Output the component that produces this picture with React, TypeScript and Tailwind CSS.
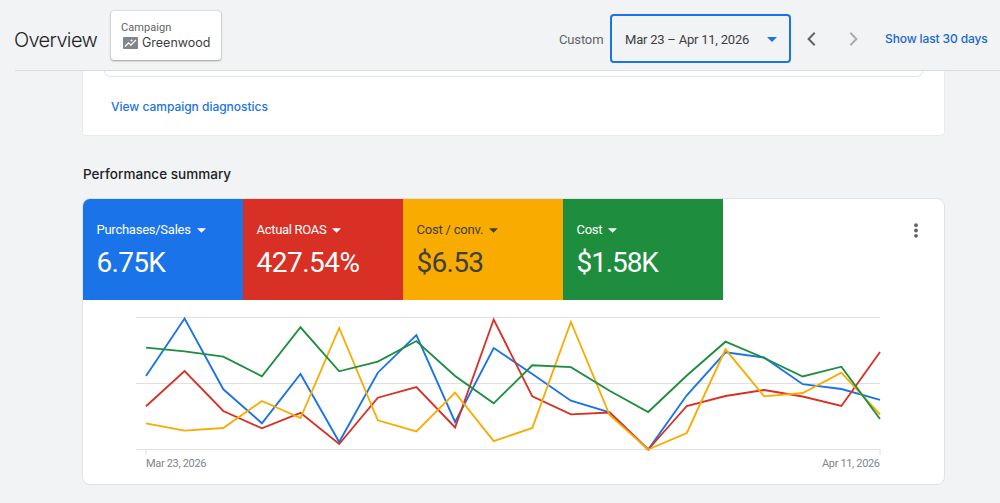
const metrics = [
  { label: "Purchases/Sales", value: "6.75K", tile: "bg-[#1a73e8] text-white", labelCls: "tracking-[-0.25px]", valueCls: "tracking-[-0.7px]" },
  { label: "Actual ROAS", value: "427.54%", tile: "bg-[#d93025] text-white", labelCls: "tracking-[-0.3px]", valueCls: "tracking-[-0.5px]" },
  { label: "Cost / conv.", value: "$6.53", tile: "bg-[#f9ab00] text-[#3c4043]", labelCls: "tracking-[-0.2px]", valueCls: "tracking-[-0.7px]" },
  { label: "Cost", value: "$1.58K", tile: "bg-[#1e8e3e] text-white", labelCls: "tracking-[-0.3px]", valueCls: "tracking-[-1.1px]" },
];

// y values inside the chart box, one per day shown
const series = [
  { color: "#1a73e8", points: [71, 13.5, 84.3, 118.3, 69, 137, 67.7, 30, 117, 43, 69, 95.7, 107.3, 144.5, 90.3, 47.3, 52.5, 79.2, 84, 94.8] },
  { color: "#d93025", points: [101.3, 66, 106, 123.3, 107.8, 139, 92.7, 82, 122.5, 14.5, 91.3, 109.3, 107.5, 144.5, 101, 91, 85, 91.5, 101, 47] },
  { color: "#f9ab00", points: [118.3, 125.6, 123, 96, 113, 23, 115.3, 126.5, 87.7, 136.2, 123, 17, 110, 144.5, 128, 44.3, 91.3, 88, 67.6, 109.5] },
  { color: "#1e8e3e", points: [42.7, 46.3, 51.7, 71.3, 22.3, 66.3, 56.6, 36, 71, 98.3, 60.3, 62.2, 85.8, 107, 70.5, 36.7, 53, 71.5, 61.7, 114] },
];

const STEP = 734 / 19;

function toPoints(values: number[]) {
  return values.map((y, i) => `${(63 + i * STEP).toFixed(1)},${y}`).join(" ");
}

function Caret({ className }: { className: string }) {
  return (
    <svg viewBox="0 0 10 5" className={className} fill="currentColor">
      <path d="M0 0h10L5 5z" />
    </svg>
  );
}

function Chevron({ className }: { className: string }) {
  return (
    <svg viewBox="0 0 9 14" className={className} fill="none" stroke="currentColor" strokeWidth="2">
      <path d="M7.700.8L1.600 7l6.100 6.200" />
    </svg>
  );
}

function Header() {
  return (
    <header className="ml-[15px] flex h-[71px] items-start border-b border-[#dadce0]">
      <h1 className="mt-[26px] -ml-px w-[97px] font-['Inter'] text-[20px] leading-7 font-[350] tracking-[-0.65px] whitespace-nowrap text-[#202124]">
        Overview
      </h1>
      <div className="mt-[11px] h-[49px] w-[110px] rounded-[3px] bg-white pt-[9px] pl-[10px] shadow-[0_1px_2px_rgba(60,64,67,0.4),0_0_2px_rgba(60,64,67,0.3)]">
        <div className="mt-px text-[11px] leading-[13px] tracking-[0.05px] text-[#5f6368]">Campaign</div>
        <div className="mt-px flex items-center gap-1">
          <svg viewBox="0 0 15 12" className="ml-[2px] h-[12px] w-[15px] shrink-0">
            <rect width="15" height="12" rx="1" fill="#80868b" />
            <path d="M2 9.500l3.600-3.600 2.300 2.300L13 3" fill="none" stroke="#fff" strokeWidth="1.3" />
            <path d="M8.500 1.700l.5 1.200 1.200.5-1.200.5-.5 1.200-.5-1.200-1.200-.5 1.200-.5z" fill="#fff" />
          </svg>
          <span className="font-['Inter'] text-[12.5px] leading-4 tracking-[0px] text-[#3c4043]">Greenwood</span>
        </div>
      </div>

      <div className="mt-[14px] ml-auto flex h-[49px] items-center">
        <span className="mt-[2px] mr-[6px] w-[45px] text-[13px] tracking-[-0.15px] text-[#5f6368]">Custom</span>
        <button className="flex h-[49px] w-[181px] items-center justify-between rounded-[4px] border-2 border-[#1a73e8] pt-[2px] pr-3 pl-[13px] text-[13px] tracking-[-0.22px] whitespace-nowrap text-[#3c4043]">
          Mar 23 – Apr 11, 2026
          <Caret className="h-[5px] w-[10px] text-[#1a73e8]" />
        </button>
        <Chevron className="ml-4 h-[14px] w-[9px] text-[#5f6368]" />
        <Chevron className="ml-[33px] h-[14px] w-[9px] rotate-180 text-[#a9acb0]" />
        <a className="mr-3 ml-[27px] w-[103px] font-['Inter'] text-[12px] font-medium tracking-[-0.12px] whitespace-nowrap text-[#1967d2]">
          Show last 30 days
        </a>
      </div>
    </header>
  );
}

function Chart() {
  return (
    <svg viewBox="0 0 860 184" className="mt-[5px] block h-[184px] w-[860px]">
      <g stroke="#e0e0e0" strokeWidth="1">
        <path d="M53 12.500H797M53 78.500H797M53 144.500H797M63 145V150M797 144V150" />
      </g>
      {series.map((s) => (
        <polyline key={s.color} points={toPoints(s.points)} fill="none" stroke={s.color} strokeWidth="1.85" />
      ))}
      <g fill="#80868b" fontFamily="Roboto, sans-serif" fontSize="11">
        <text x="63" y="162" textLength="60.500">Mar 23, 2026</text>
        <text x="739" y="162" textLength="58">Apr 11, 2026</text>
      </g>
    </svg>
  );
}

export default function App() {
  return (
    <div className="h-[503px] w-[1000px] overflow-hidden bg-[#f1f3f4] font-['Roboto',sans-serif]">
      <Header />
      <main className="ml-[82px] w-[862.5px]">
        <section className="h-[65px] rounded-b-[4px] border border-t-0 border-[#e8eaed] bg-white px-[21px]">
          <div className="h-[6px] rounded-b-[7px] border border-t-0 border-[#e3e5e8]" />
          <a className="mt-[22px] ml-[7px] block font-['Inter'] text-[12px] leading-4 font-medium tracking-[-0.02px] text-[#1a73e8]">
            View campaign diagnostics
          </a>
        </section>

        <h2 className="mt-[28px] ml-px font-['Inter'] text-[13.5px] leading-5 font-medium tracking-[0.03px] text-[#202124]">
          Performance summary
        </h2>

        <section className="mt-[14px] h-[287px] overflow-hidden rounded-[8px] border border-[#e0e3e6] bg-white">
          <div className="flex h-[101px] items-start">
            {metrics.map((m) => (
              <div key={m.label} className={`h-[101px] w-[160px] pt-[23px] pl-[13.5px] ${m.tile}`}>
                <div className="flex items-center gap-[6px] text-[13px] leading-4">
                  <span className={m.labelCls}>{m.label}</span>
                  <Caret className="h-[5px] w-[9px]" />
                </div>
                <div className={`mt-[8px] text-[28px] leading-[34px] ${m.valueCls}`}>{m.value}</div>
              </div>
            ))}
            <svg viewBox="0 0 4 15" className="mt-[24px] mr-[26px] ml-auto h-[15px] w-[4px]" fill="#5f6368">
              <circle cx="2" cy="2.2" r="1.9" />
              <circle cx="2" cy="7.5" r="1.9" />
              <circle cx="2" cy="12.8" r="1.9" />
            </svg>
          </div>
          <Chart />
        </section>
      </main>
    </div>
  );
}
